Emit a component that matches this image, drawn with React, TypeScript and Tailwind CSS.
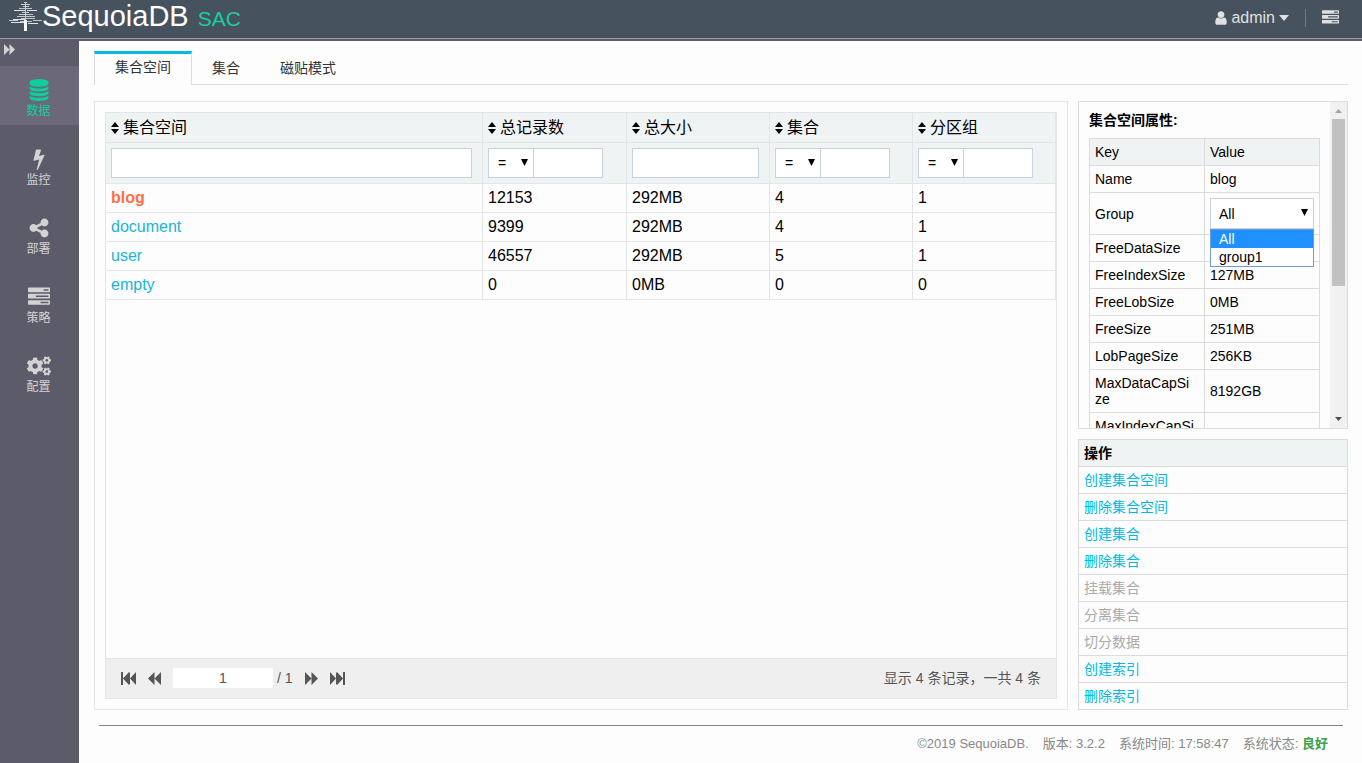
import React, { useState } from 'react';
import { FaCogs } from 'react-icons/fa';

const glyphs = {
  database:
    'M896 768q237 0 443-43t325-127v170q0 69-103 128t-280 93.5-385 34.5-385-34.5-280-93.5-103-128v-170q119 84 325 127t443 43zm0 768q237 0 443-43t325-127v170q0 69-103 128t-280 93.5-385 34.5-385-34.5-280-93.5-103-128v-170q119 84 325 127t443 43zm0-384q237 0 443-43t325-127v170q0 69-103 128t-280 93.5-385 34.5-385-34.5-280-93.5-103-128v-170q119 84 325 127t443 43zm0-1152q208 0 385 34.5t280 93.5 103 128v128q0 69-103 128t-280 93.5-385 34.5-385-34.5-280-93.5-103-128v-128q0-69 103-128t280-93.5 385-34.5z',
  bolt: 'M1333 566q18 20 7 44l-540 1157q-13 25-42 25-4 0-14-2-17-5-25.5-19t-4.5-30l197-808-406 101q-4 1-12 1-18 0-31-11-18-15-13-39l201-825q4-14 16-23t28-9h328q19 0 32 12.5t13 29.5q0 8-5 18l-171 463 396-98q8-2 12-2 19 0 34 15z',
  share: 'M1344 1024q133 0 226.5 93.5t93.5 226.5-93.5 226.5-226.5 93.5-226.5-93.5-93.5-226.5q0-12 2-34l-360-180q-92 86-218 86-133 0-226.5-93.5t-93.5-226.5 93.5-226.5 226.5-93.5q126 0 218 86l360-180q-2-22-2-34 0-133 93.5-226.5t226.5-93.5 226.5 93.5 93.5 226.5-93.5 226.5-226.5 93.5q-126 0-218-86l-360 180q2 22 2 34t-2 34l360 180q92-86 218-86z',
  tasks:
    'M1024 1408h640v-128h-640v128zm-384-512h1024v-128h-1024v128zm640-512h384v-128h-384v128zm512 832v256q0 26-19 45t-45 19h-1664q-26 0-45-19t-19-45v-256q0-26 19-45t45-19h1664q26 0 45 19t19 45zm0-512v256q0 26-19 45t-45 19h-1664q-26 0-45-19t-19-45v-256q0-26 19-45t45-19h1664q26 0 45 19t19 45zm0-512v256q0 26-19 45t-45 19h-1664q-26 0-45-19t-19-45v-256q0-26 19-45t45-19h1664q26 0 45 19t19 45z',
  user: 'M1536 1399q0 109-62.5 187t-150.5 78h-854q-88 0-150.5-78t-62.5-187q0-85 8.5-160.5t31.5-152 58.5-131 94-89 134.5-34.5q131 128 313 128t313-128q76 0 134.5 34.5t94 89 58.5 131 31.5 152 8.5 160.5zm-256-887q0 159-112.5 271.5t-271.5 112.5-271.5-112.5-112.5-271.5 112.5-271.5 271.5-112.5 271.5 112.5 112.5 271.5z',
};

const Glyph: React.FC<{ name: keyof typeof glyphs; className: string }> = ({ name, className }) => (
  <svg viewBox="0 0 1792 1792" fill="currentColor" className={className} aria-hidden="true">
    <path d={glyphs[name]} />
  </svg>
);

const Forward: React.FC<{ className: string; bar?: boolean }> = ({ className, bar }) => (
  <svg viewBox={bar ? '0 0 15 12' : '0 0 12 12'} preserveAspectRatio="none" fill="currentColor" className={className} aria-hidden="true">
    <path d="M0 0l6 6V0l6 6-6 6V6l-6 6z" />
    {bar && <path d="M7 0l6 6-6 6zM13 0h2v12h-2z" />}
  </svg>
);

const Tree = () => (
  <svg viewBox="0 0 33 30" fill="none" stroke="#c3c9cd" className="h-[30px] w-[33px] shrink-0" aria-hidden="true">
    <path d="M15 .5h3M12 2.500h9M14 4.500h6M10 6.500h13M13 10.500h7M10 12.500h14M8 14.500h18M12 16.500h14M0 18.500h9M24 18.500h9M11 19.500h12" />
    <path d="M5 8.500h11M18 8.500h10M4 17.500h12M2 20.500h13M19 21.500h10" stroke="#dfe3e5" />
    <path d="M16.500 1v18" />
    <path d="M16.500 18v11" stroke="#fff" strokeWidth="3" />
  </svg>
);

const SortIcon = () => (
  <svg viewBox="0 0 8 12" className="h-3 w-2" aria-hidden="true">
    <path d="M4 0l4 5H0zM0 7h8l-4 5z" />
  </svg>
);

const SelectArrow = () => (
  <svg viewBox="0 0 7 8" className="pointer-events-none absolute right-[6px] top-[10px] h-2 w-[7px]" aria-hidden="true">
    <path d="M0 1h7L3.500 8z" />
  </svg>
);

const menu: { name: string; icon: React.ReactNode }[] = [
  { name: '数据', icon: <Glyph name="database" className="size-[22px]" /> },
  { name: '监控', icon: <Glyph name="bolt" className="size-[22px]" /> },
  { name: '部署', icon: <Glyph name="share" className="size-[22px]" /> },
  { name: '策略', icon: <Glyph name="tasks" className="size-[22px]" /> },
  { name: '配置', icon: <FaCogs className="size-6" /> },
];

const columns = [
  { title: '集合空间', compare: false },
  { title: '总记录数', compare: true },
  { title: '总大小', compare: false },
  { title: '集合', compare: true },
  { title: '分区组', compare: true },
];

const spaces = [
  { name: 'blog', records: 12153, size: '292MB', collections: 4, groups: 1 },
  { name: 'document', records: 9399, size: '292MB', collections: 4, groups: 1 },
  { name: 'user', records: 46557, size: '292MB', collections: 5, groups: 1 },
  { name: 'empty', records: 0, size: '0MB', collections: 0, groups: 0 },
];

const properties = [
  ['Name', 'blog'],
  ['Group', ''],
  ['FreeDataSize', ''],
  ['FreeIndexSize', '127MB'],
  ['FreeLobSize', '0MB'],
  ['FreeSize', '251MB'],
  ['LobPageSize', '256KB'],
  ['MaxDataCapSize', '8192GB'],
  ['MaxIndexCapSize', ''],
];

const operations = [
  { name: '创建集合空间', enabled: true },
  { name: '删除集合空间', enabled: true },
  { name: '创建集合', enabled: true },
  { name: '删除集合', enabled: true },
  { name: '挂载集合', enabled: false },
  { name: '分离集合', enabled: false },
  { name: '切分数据', enabled: false },
  { name: '创建索引', enabled: true },
  { name: '删除索引', enabled: true },
];

const Header = () => (
  <header className="flex h-[39px] items-center justify-between border-b border-[#a09fa5] bg-[#46525d] pl-[9px] pr-[23px]">
    <div className="flex items-center pb-1">
      <Tree />
      <div className="flex items-baseline gap-[9px] leading-8">
        <span className="text-[29px] text-white">SequoiaDB</span>
        <span className="text-[21px] text-[#16cf9f]">SAC</span>
      </div>
    </div>
    <div className="flex items-center pb-[3px] text-[#e0e0e0]">
      <button className="flex items-center text-base leading-5">
        <Glyph name="user" className="mr-[2px] size-4" />
        admin
        <svg viewBox="0 0 10 6" fill="currentColor" className="ml-1 h-[6px] w-[10px]" aria-hidden="true">
          <path d="M0 0h10L5 6z" />
        </svg>
      </button>
      <span className="mx-4 h-[18px] w-px bg-[#77797c]" />
      <button aria-label="任务">
        <Glyph name="tasks" className="size-[17px]" />
      </button>
    </div>
  </header>
);

const Sidebar = () => (
  <nav className="w-[79px] shrink-0 bg-[#5c5b6a] text-[#d3d3d3]">
    <button className="flex h-[25px] w-full items-start pl-1 pt-[3px]" aria-label="展开菜单">
      <Forward className="h-[11px] w-[11px]" />
    </button>
    <ul className="flex flex-col gap-[10px]">
      {menu.map((item, index) => (
        <li key={item.name}>
          <a
            href="#"
            className={
              index === 0
                ? 'flex h-[59px] flex-col items-center bg-[#6b6979] pr-[2px] pt-3 text-[#0ccf9c]'
                : 'flex h-[59px] flex-col items-center pr-[2px] pt-3'
            }
          >
            <span className="flex h-6 items-center">{item.icon}</span>
            <span className="text-xs leading-[18px]">{item.name}</span>
          </a>
        </li>
      ))}
    </ul>
  </nav>
);

const Tabs = () => (
  <div className="flex h-[34px] border-b border-[#dcdcdc] text-sm text-[#333]" role="tablist">
    <button
      role="tab"
      aria-selected="true"
      className="-mb-px border-x border-t-[3px] border-x-[#dcdcdc] border-t-[#00b9e4] bg-[#fdfdfd] px-5 pb-[5px]"
    >
      集合空间
    </button>
    <button role="tab" aria-selected="false" className="px-5">集合</button>
    <button role="tab" aria-selected="false" className="px-5">磁贴模式</button>
  </div>
);

const Filter: React.FC<{ title: string; compare: boolean }> = ({ title, compare }) => {
  if (!compare) {
    return <input aria-label={title} className="block h-[30px] w-full border border-[#c8d2dd] bg-white px-2 text-sm" />;
  }
  return (
    <div className="flex">
      <div className="relative w-[46px]">
        <select aria-label={title + '比较'} className="h-[30px] w-full appearance-none border border-[#c8d2dd] bg-white pl-[9px] text-sm">
          <option>=</option>
          <option>&gt;</option>
          <option>&lt;</option>
        </select>
        <SelectArrow />
      </div>
      <input aria-label={title} className="-ml-px h-[30px] w-[70px] border border-[#c8d2dd] bg-white px-2 text-sm" />
    </div>
  );
};

const SpaceTable = () => {
  const [selected, setSelected] = useState('blog');
  const cell = 'border-r border-b border-[#e2e6e8] pl-[5px]';

  return (
    <section className="flex min-w-0 flex-1 flex-col border border-[#e2e6e8] p-[10px]">
      <div className="flex flex-1 flex-col border border-[#e2e6e8]">
        <table className="w-full table-fixed border-separate border-spacing-0 text-left text-base text-black">
          <colgroup>
            <col />
            <col className="w-[144px]" />
            <col className="w-[143px]" />
            <col className="w-[143px]" />
            <col className="w-[143px]" />
          </colgroup>
          <thead className="bg-[#eff3f4]">
            <tr className="h-[30px]">
              {columns.map((column) => (
                <th key={column.title} className="border-r border-b border-[#e2e6e8] pl-[5px] font-normal leading-5">
                  <button className="flex items-center gap-1">
                    <SortIcon />
                    {column.title}
                  </button>
                </th>
              ))}
            </tr>
            <tr className="h-[41px]">
              {columns.map((column) => (
                <td key={column.title} className="border-r border-b border-[#e2e6e8] pl-[5px] pr-[10px]">
                  <Filter title={column.title} compare={column.compare} />
                </td>
              ))}
            </tr>
          </thead>
          <tbody>
            {spaces.map((space) => (
              <tr key={space.name} className="h-[29px] leading-5">
                <td className={cell}>
                  <a
                    href="#"
                    onClick={() => setSelected(space.name)}
                    className={selected === space.name ? 'font-bold text-[#ff6f47]' : 'text-[#19b5d5]'}
                  >
                    {space.name}
                  </a>
                </td>
                <td className={cell}>{space.records}</td>
                <td className={cell}>{space.size}</td>
                <td className={cell}>{space.collections}</td>
                <td className={cell}>{space.groups}</td>
              </tr>
            ))}
          </tbody>
        </table>
        <div className="mt-auto flex h-10 items-center border-t border-[#e2e6e8] bg-[#efefef] px-[15px] pb-px text-sm text-[#555]">
          <button aria-label="首页">
            <Forward bar className="h-[13px] w-[15px] rotate-180" />
          </button>
          <button aria-label="上一页" className="ml-3">
            <Forward className="h-[13px] w-[13px] rotate-180" />
          </button>
          <input aria-label="页码" defaultValue="1" className="ml-3 h-5 w-[100px] bg-white text-center text-sm" />
          <span className="ml-1">/ 1</span>
          <button aria-label="下一页" className="ml-3">
            <Forward className="h-[13px] w-[13px]" />
          </button>
          <button aria-label="末页" className="ml-3">
            <Forward bar className="h-[13px] w-[15px]" />
          </button>
          <span className="ml-auto">显示 4 条记录，一共 4 条</span>
        </div>
      </div>
    </section>
  );
};

const GroupSelect = () => (
  <div className="relative">
    <select id="group" className="block h-[31px] w-full appearance-none border border-[#c8d2dd] bg-white pl-2 text-sm">
      <option>All</option>
      <option>group1</option>
    </select>
    <SelectArrow />
    <ul className="absolute inset-x-0 top-full z-10 border border-[#7297d6] bg-white leading-[18px]" role="listbox">
      <li role="option" aria-selected="true" className="bg-[#1e90ff] px-2 text-white">All</li>
      <li role="option" aria-selected="false" className="px-2">group1</li>
    </ul>
  </div>
);

const PropertyPanel = () => (
  <section className="flex h-[328px] overflow-hidden border border-[#dcdcdc] text-sm leading-4 text-black">
    <div className="min-w-0 flex-1 px-[10px]">
      <h2 className="h-9 pt-[10px] font-bold">集合空间属性:</h2>
      <table className="w-full table-fixed border-separate border-spacing-0 border-l border-t border-[#dcdcdc] text-left">
        <thead className="bg-[#eff3f4]">
          <tr>
            <th className="border-r border-b border-[#dcdcdc] p-[5px] font-normal">Key</th>
            <th className="border-r border-b border-[#dcdcdc] p-[5px] font-normal">Value</th>
          </tr>
        </thead>
        <tbody>
          {properties.map(([key, value]) => (
            <tr key={key}>
              <td className="break-all border-r border-b border-[#dcdcdc] py-[5px] pl-[5px] pr-2">
                {key === 'Group' ? <label htmlFor="group">{key}</label> : key}
              </td>
              <td className="border-r border-b border-[#dcdcdc] p-[5px]">{key === 'Group' ? <GroupSelect /> : value}</td>
            </tr>
          ))}
        </tbody>
      </table>
    </div>
    <div className="flex w-[17px] flex-col items-center bg-[#f1f1f1]">
      <svg viewBox="0 0 17 17" className="size-[17px] fill-[#a3a3a3]" aria-hidden="true">
        <path d="M5 11h7L8.500 7z" />
      </svg>
      <div className="h-[167px] w-[13px] bg-[#c1c1c1]" />
      <svg viewBox="0 0 17 17" className="mt-auto size-[17px] fill-[#505050]" aria-hidden="true">
        <path d="M5 6h7L8.500 10z" />
      </svg>
    </div>
  </section>
);

const OperationPanel = () => (
  <section className="border border-b-0 border-[#dcdcdc] text-sm">
    <h2 className="h-[27px] border-b border-[#dcdcdc] bg-[#eff3f4] px-[5px] font-bold leading-[26px] text-black">操作</h2>
    <ul>
      {operations.map((operation) => (
        <li key={operation.name} className="h-[27px] border-b border-[#dcdcdc] px-[5px] leading-[26px]">
          {operation.enabled ? (
            <a href="#" className="text-[#00b9dc]">{operation.name}</a>
          ) : (
            <span className="text-[#aaa]">{operation.name}</span>
          )}
        </li>
      ))}
    </ul>
  </section>
);

const Footer = () => (
  <footer className="mx-[5px] mt-[15px] flex h-[38px] items-center justify-end gap-[14px] border-t border-[#858585] pb-[2px] pr-[15px] text-[13px] text-[#888]">
    <span>©2019 SequoiaDB.</span>
    <span>版本: 3.2.2</span>
    <span>系统时间: 17:58:47</span>
    <span>
      系统状态: <b className="text-[#3f9f4a]">良好</b>
    </span>
  </footer>
);

const App = () => (
  <div className="flex min-h-screen flex-col bg-[#fdfdfd] font-['Liberation_Sans','Noto_Sans_CJK_SC',sans-serif]">
    <Header />
    <div className="h-[2px] bg-[#5c5b6a]" />
    <div className="flex flex-1">
      <Sidebar />
      <main className="flex min-w-0 flex-1 flex-col pl-[15px] pr-[14px] pt-[10px]">
        <Tabs />
        <div className="mt-4 flex flex-1 gap-[10px]">
          <SpaceTable />
          <aside className="flex w-[270px] shrink-0 flex-col gap-[10px]">
            <PropertyPanel />
            <OperationPanel />
          </aside>
        </div>
        <Footer />
      </main>
    </div>
  </div>
);

export default App;
